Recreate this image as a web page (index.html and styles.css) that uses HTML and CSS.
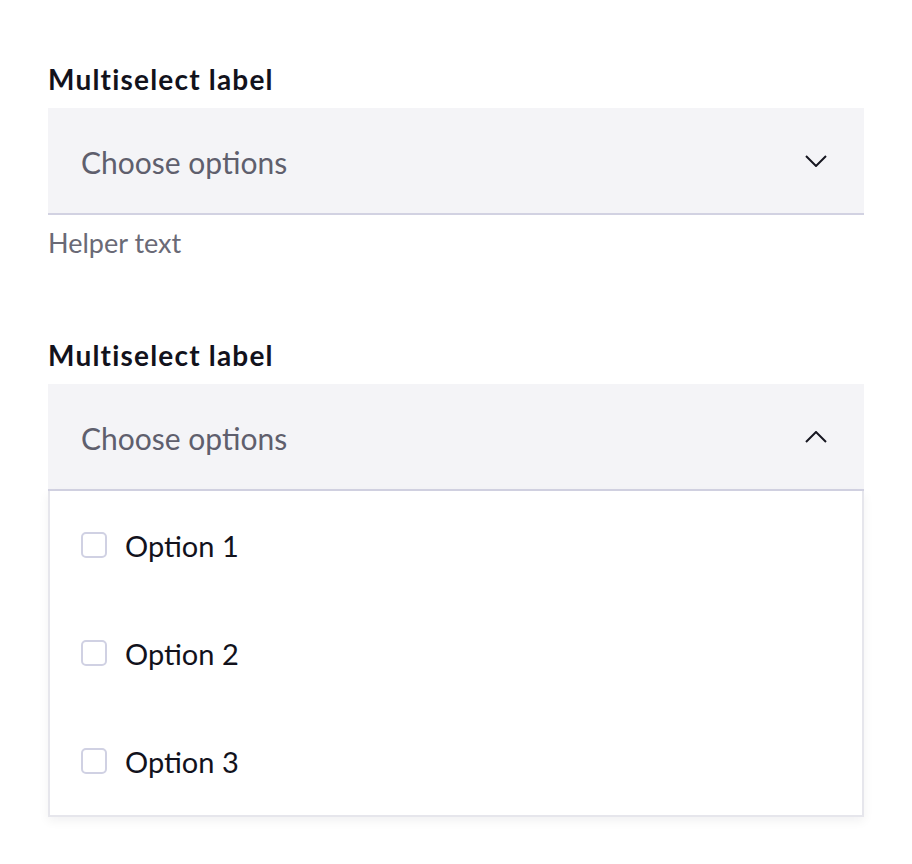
FILE: index.html
```html
<!DOCTYPE html>
<html lang="en">
<head>
    <meta charset="UTF-8">
    <meta name="viewport" content="width=device-width, initial-scale=1.0">
    <title>Multiselect</title>
    <link rel="stylesheet" href="styles.css">
</head>
<body>

    <div class="multiselect">
        <div class="ms-label">Multiselect label</div>
        <div class="ms-field">
            <span class="ms-placeholder">Choose options</span>
            <svg class="ms-chevron" width="22" height="12" viewBox="0 0 22 12">
                <path d="M1 1 L11 11 L21 1" fill="none" stroke="#161621" stroke-width="2"/>
            </svg>
        </div>
        <div class="ms-helper">Helper text</div>
    </div>

    <div class="multiselect open">
        <div class="ms-label">Multiselect label</div>
        <div class="ms-field">
            <span class="ms-placeholder">Choose options</span>
            <svg class="ms-chevron" width="22" height="12" viewBox="0 0 22 12">
                <path d="M1 11 L11 1 L21 11" fill="none" stroke="#161621" stroke-width="2"/>
            </svg>
        </div>
        <div class="ms-menu">
            <label class="ms-option"><span class="ms-check"></span>Option 1</label>
            <label class="ms-option"><span class="ms-check"></span>Option 2</label>
            <label class="ms-option"><span class="ms-check"></span>Option 3</label>
        </div>
    </div>

</body>
</html>
```

FILE: styles.css
```css
body {
    margin: 0;
    padding: 59px 48px 0 48px;
    font-family: Lato, "Noto Sans", sans-serif;
    background: #ffffff;
    color: #161621;
}

.multiselect {
    margin-bottom: 74px;
}

.ms-label {
    font-size: 28px;
    font-weight: bold;
    letter-spacing: 1.2px;
    line-height: 40px;
    margin-bottom: 9px;
    color: #12121c;
}

/* champ de sélection */
.ms-field {
    display: flex;
    align-items: center;
    justify-content: space-between;
    box-sizing: border-box;
    height: 107px;
    padding: 3px 37px 0 33px;
    background: #f4f4f7;
    border-bottom: 2px solid #d2d2e2;
}

.ms-placeholder {
    font-size: 30px;
    color: #5f5f6d;
}

.ms-chevron {
    display: block;
    margin-top: -3px;
}

.ms-helper {
    font-size: 27px;
    line-height: 36px;
    margin-top: 10px;
    color: #6a6a76;
}

/* liste déroulante */
.ms-menu {
    border: 2px solid #e6e6ec;
    border-top: none;
    box-shadow: 0 4px 10px rgba(20, 20, 40, 0.06);
    background: #ffffff;
}

.ms-option {
    display: flex;
    align-items: center;
    height: 108px;
    padding-left: 31px;
    font-size: 29px;
    color: #12121c;
}

.ms-check {
    width: 22px;
    height: 22px;
    border: 2px solid #d0d1e3;
    border-radius: 5px;
    margin-right: 18px;
    background: #ffffff;
}
```
